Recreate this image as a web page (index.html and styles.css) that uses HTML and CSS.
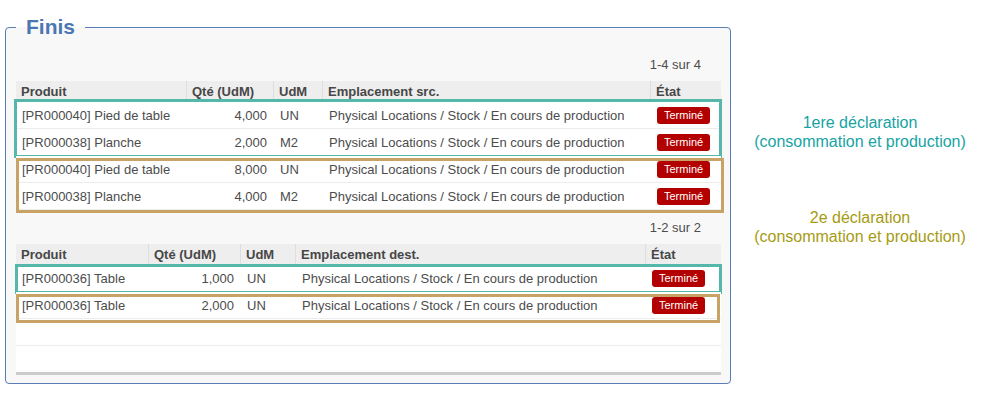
FILE: index.html
```html
<!DOCTYPE html>
<html lang="fr">
<head>
  <meta charset="UTF-8" />
  <title>Finis</title>
  <link rel="stylesheet" href="styles.css">
</head>
<body>
  <div class="page">
    <fieldset class="group">
      <legend>Finis</legend>

      <div class="list list-src">
        <div class="pager">1-4 sur 4</div>
        <div class="row head">
          <div>Produit</div>
          <div>Qté (UdM)</div>
          <div>UdM</div>
          <div>Emplacement src.</div>
          <div>État</div>
        </div>
        <div class="batch batch-1">
          <div class="row">
            <div>[PR000040] Pied de table</div>
            <div class="num">4,000</div>
            <div>UN</div>
            <div>Physical Locations / Stock / En cours de production</div>
            <div><span class="badge">Terminé</span></div>
          </div>
          <div class="row">
            <div>[PR000038] Planche</div>
            <div class="num">2,000</div>
            <div>M2</div>
            <div>Physical Locations / Stock / En cours de production</div>
            <div><span class="badge">Terminé</span></div>
          </div>
        </div>
        <div class="batch batch-2">
          <div class="row">
            <div>[PR000040] Pied de table</div>
            <div class="num">8,000</div>
            <div>UN</div>
            <div>Physical Locations / Stock / En cours de production</div>
            <div><span class="badge">Terminé</span></div>
          </div>
          <div class="row">
            <div>[PR000038] Planche</div>
            <div class="num">4,000</div>
            <div>M2</div>
            <div>Physical Locations / Stock / En cours de production</div>
            <div><span class="badge">Terminé</span></div>
          </div>
        </div>
      </div>

      <div class="list list-dest">
        <div class="pager">1-2 sur 2</div>
        <div class="row head">
          <div>Produit</div>
          <div>Qté (UdM)</div>
          <div>UdM</div>
          <div>Emplacement dest.</div>
          <div>État</div>
        </div>
        <div class="batch batch-1">
          <div class="row">
            <div>[PR000036] Table</div>
            <div class="num">1,000</div>
            <div>UN</div>
            <div>Physical Locations / Stock / En cours de production</div>
            <div><span class="badge">Terminé</span></div>
          </div>
        </div>
        <div class="batch batch-2">
          <div class="row">
            <div>[PR000036] Table</div>
            <div class="num">2,000</div>
            <div>UN</div>
            <div>Physical Locations / Stock / En cours de production</div>
            <div><span class="badge">Terminé</span></div>
          </div>
        </div>
        <div class="filler"></div>
        <div class="filler"></div>
      </div>
    </fieldset>

    <div class="notes">
      <p class="note note-1">1ere déclaration<br>(consommation et production)</p>
      <p class="note note-2">2e déclaration<br>(consommation et production)</p>
    </div>
  </div>
</body>
</html>
```

FILE: styles.css
```css
body {
  margin: 0;
  background-color: #ffffff;
  font-family: 'Liberation Sans', Arial, sans-serif;
  font-size: 13px;
  color: #4c4c4c;
}
.page {
  display: flex;
  align-items: flex-start;
}
/* bloc "Finis" */
.group {
  width: 705px;
  margin: 15px 0 0 5px;
  padding: 12px 9px 8px 10px;
  border: 1px solid #5a7db3;
  border-radius: 4px;
  background-color: #f8f8f8;
}
.group legend {
  padding: 0 10px;
  font-size: 21px;
  line-height: 24px;
  font-weight: bold;
  color: #4a76b2;
}
.pager {
  margin: 4px 0 6px;
  padding-right: 20px;
  line-height: 20px;
  text-align: right;
}
.list-dest .pager {
  margin-top: 8px;
}
.row {
  display: grid;
  height: 27px;
  align-items: center;
  background-color: #ffffff;
  border-bottom: 1px solid #ececec;
  box-sizing: border-box;
}
.list-src .row {
  grid-template-columns: 170px 87px 49px 328px 1fr;
}
.list-dest .row {
  grid-template-columns: 132px 92px 55px 350px 1fr;
}
.row > div {
  padding: 0 6px;
  white-space: nowrap;
}
.row > div:nth-child(3),
.row > div:nth-child(4) {
  padding-left: 7px;
}
.row .num {
  text-align: right;
}
.row.head {
  height: 21px;
  background-color: #eeeeee;
  border-bottom: none;
  font-weight: bold;
  color: #474747;
}
.row.head > div {
  padding-left: 5px;
  line-height: 21px;
}
.row.head > div + div {
  border-left: 1px solid #dedede;
}
/* cadres d'annotation posés sur les lignes */
.batch {
  position: relative;
}
.batch::after {
  content: '';
  position: absolute;
  border: 3px solid;
  pointer-events: none;
}
.batch-1::after {
  inset: -3px -1px -2px -2px;
  border-color: #55b7a9;
}
.batch-2::after {
  inset: 2px -3px -3px 0;
  border-color: #c9a266;
}
.list-dest .batch-1::after {
  inset: -1px -1px -2px -1px;
}
.list-dest .batch-2::after {
  inset: 2px 1px -4px 0;
}
.badge {
  display: inline-block;
  margin-left: 1px;
  padding: 1px 7px;
  border-radius: 3px;
  background-color: #b30000;
  color: #ffffff;
  font-size: 11px;
  line-height: 15px;
}
.filler {
  height: 27px;
  box-sizing: border-box;
  background-color: #ffffff;
  border-bottom: 1px solid #ececec;
}
.filler:last-child {
  height: 29px;
  border-bottom: 3px solid #cccccc;
}
/* annotations */
.notes {
  flex: 1;
  padding-left: 8px;
  padding-top: 113px;
  text-align: center;
  font-size: 16px;
  line-height: 19px;
}
.note {
  margin: 0;
}
.note-1 {
  color: #17a3a3;
}
.note-2 {
  margin-top: 57px;
  color: #a69b12;
}
```
